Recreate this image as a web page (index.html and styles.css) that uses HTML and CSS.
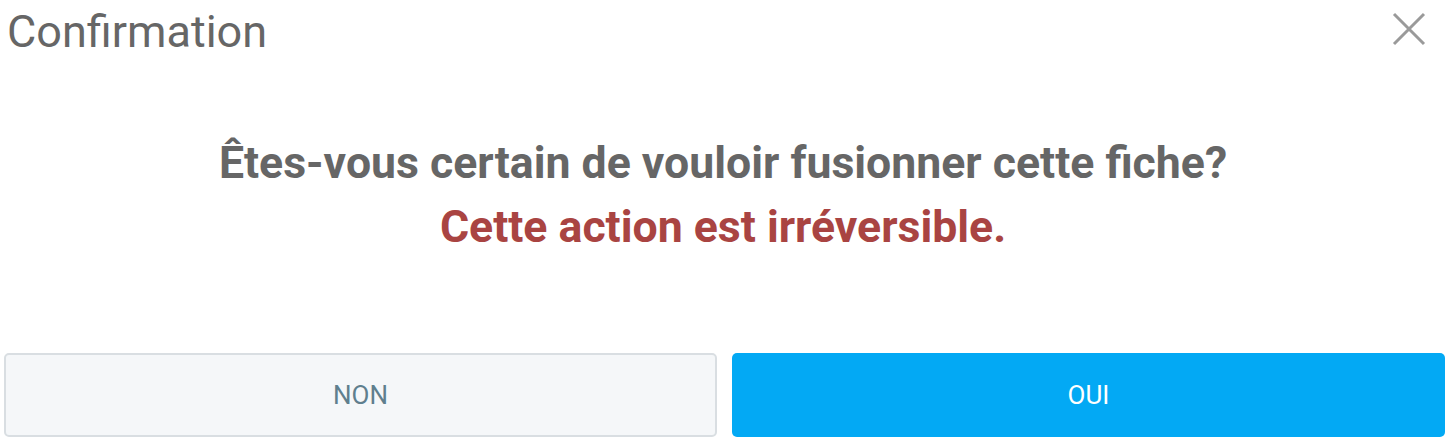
FILE: index.html
```html
<!DOCTYPE html>
<html>
<head>
    <meta charset="UTF-8">
    <title>Confirmation</title>
    <link rel="stylesheet" href="styles.css">
</head>
<body>
    <div class="modal">
        <div class="modal-header">
            <h2 class="modal-title">Confirmation</h2>
            <button class="close" aria-label="Fermer">
                <svg width="34" height="34" viewBox="0 0 34 34">
                    <path d="M2 2 L32 32 M32 2 L2 32" stroke="#9a9a9a" stroke-width="3" fill="none"/>
                </svg>
            </button>
        </div>
        <div class="modal-body">
            <p class="question">Êtes-vous certain de vouloir fusionner cette fiche?</p>
            <p class="warning">Cette action est irréversible.</p>
        </div>
        <div class="modal-footer">
            <button class="btn btn-cancel">NON</button>
            <button class="btn btn-confirm">OUI</button>
        </div>
    </div>
</body>
</html>
```

FILE: styles.css
```css
body {
    margin: 0;
    font-family: Roboto, "Liberation Sans", Arial, sans-serif;
    background: #fff;
}
.modal {
    width: 1456px;
    height: 442px;
    display: flex;
    flex-direction: column;
}
.modal-header {
    display: flex;
    justify-content: space-between;
    align-items: flex-start;
    padding: 0 30px 0 7px;
}
.modal-title {
    margin: 0;
    padding-top: 6px;
    font-size: 45px;
    font-weight: 400;
    color: #666;
    line-height: 52px;
}
.close {
    background: none;
    border: none;
    padding: 0;
    margin-top: 12px;
    cursor: pointer;
}
.modal-body {
    flex: 1;
    text-align: center;
    padding: 73px 10px 0 0;
}
.modal-body p {
    margin: 0;
    font-size: 44.6px;
    font-weight: 700;
    line-height: 64px;
}
.question {
    color: #666;
}
.warning {
    color: #a94442;
}
.modal-footer {
    display: flex;
    gap: 15px;
    padding: 0 0 5px 4px;
}
.btn {
    flex: none;
    width: 713px;
    height: 84px;
    border-radius: 5px;
    font-family: Roboto, "Liberation Sans", Arial, sans-serif;
    font-size: 26px;
    cursor: pointer;
}
.btn-cancel {
    background: #f5f7f9;
    border: 2px solid #d9dee2;
    color: #5f7f8e;
}
.btn-confirm {
    background: #03a9f4;
    border: none;
    color: #fff;
}
```
